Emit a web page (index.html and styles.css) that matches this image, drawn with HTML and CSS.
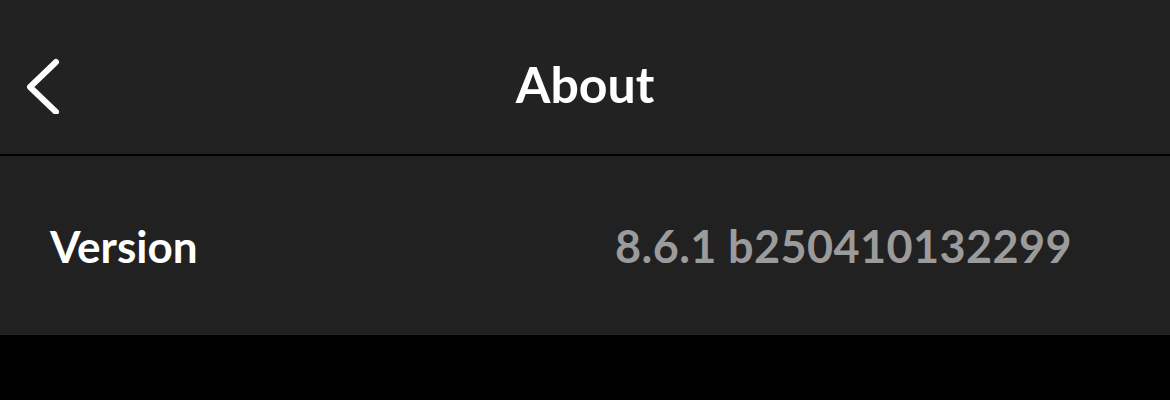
FILE: index.html
```html
<!DOCTYPE html>
<html lang="en">
<head>
  <meta charset="UTF-8" />
  <title>About</title>
  <link rel="stylesheet" href="styles.css">
</head>
<body>

  <!-- Cabeçalho -->
  <div class="header">
    <button class="back" aria-label="Back">
      <svg width="40" height="60" viewBox="0 0 40 60">
        <path d="M32 8 L6 33 L32 58" fill="none" stroke="#ffffff" stroke-width="6" stroke-linecap="round" stroke-linejoin="round"/>
      </svg>
    </button>
    <div class="titulo">About</div>
  </div>

  <!-- Linha da versão -->
  <div class="linha">
    <span class="rotulo">Version</span>
    <span class="valor">8.6.1 b250410132299</span>
  </div>

</body>
</html>
```

FILE: styles.css
```css
body {
  margin: 0;
  padding: 0;
  background-color: #000000;
  font-family: Lato, "Noto Sans", sans-serif;
  overflow: hidden;
}

.header {
  position: relative;
  height: 154px;
  background: #222222;
  border-bottom: 2px solid #000000;
  display: flex;
  align-items: center;
  justify-content: center;
}

.back {
  position: absolute;
  left: 24px;
  top: 54px;
  padding: 0;
  border: none;
  background: none;
  cursor: pointer;
}

.back svg {
  display: block;
}

.titulo {
  color: #ffffff;
  font-size: 50px;
  font-weight: 700;
  margin-top: 14px;
}

.linha {
  height: 179px;
  background: #212121;
  display: flex;
  align-items: center;
  justify-content: space-between;
  padding: 0 98px 0 50px;
}

.rotulo {
  color: #ffffff;
  font-size: 44px;
  font-weight: 700;
}

.valor {
  color: #9b9b9b;
  font-size: 45px;
  font-weight: 700;
  letter-spacing: 0.4px;
}
```
